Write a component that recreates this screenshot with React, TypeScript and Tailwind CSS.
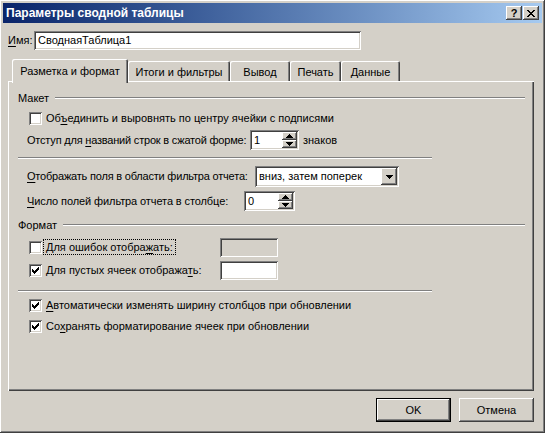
import React from "react"

// classic 3D borders
const RAISED = "shadow-[inset_-1px_-1px_#404040,inset_1px_1px_#ffffff,inset_-2px_-2px_#808080,inset_2px_2px_#d4d0c8]"
const SUNKEN = "shadow-[inset_1px_1px_#808080,inset_-1px_-1px_#ffffff,inset_2px_2px_#404040,inset_-2px_-2px_#d4d0c8]"

function U({ children }: { children: React.ReactNode }) {
  return <span className="underline underline-offset-[2px]">{children}</span>
}

function Checkbox({ checked }: { checked?: boolean }) {
  return (
    <div className={`w-[13px] h-[13px] bg-white shrink-0 relative ${SUNKEN}`}>
      {checked && (
        <svg className="absolute left-[3px] top-[3px]" width="7" height="7" viewBox="0 0 7 7">
          <path d="M0 2h1v1h1v1h1v-1h1v-1h1v-1h1v-1h1v3h-1v1h-1v1h-1v1h-1v1h-1v-1h-1v-1h-1z" fill="#000" />
        </svg>
      )}
    </div>
  )
}

function Arrow({ dir }: { dir: "up" | "down" }) {
  return (
    <svg width="7" height="4" viewBox="0 0 7 4">
      {dir === "up" ? <path d="M3 0h1v1h1v1h1v1h1v1H0V3h1V2h1V1h1z" fill="#000" /> : <path d="M0 0h7v1H6v1H5v1H4v1H3V3H2V2H1V1H0z" fill="#000" />}
    </svg>
  )
}

function Spinner({ value, width }: { value: string; width: string }) {
  return (
    <div className={`${width} h-[20px] shrink-0 bg-white flex items-stretch p-[2px] ${SUNKEN}`}>
      <div className="flex-1 pl-[2px] leading-[16px]">{value}</div>
      <div className="w-[15px] flex flex-col">
        <div className={`flex-1 bg-[#d4d0c8] flex items-center justify-center ${RAISED}`}>
          <Arrow dir="up" />
        </div>
        <div className={`flex-1 bg-[#d4d0c8] flex items-center justify-center ${RAISED}`}>
          <Arrow dir="down" />
        </div>
      </div>
    </div>
  )
}

function GroupTitle({ title }: { title: string }) {
  return (
    <div className="h-[14px] flex items-center pl-[10px] pr-[9px]">
      <span className="leading-[14px]">{title}</span>
      <div className="flex-1 ml-[6px] h-[2px] border-t border-t-[#808080] border-b border-b-white" />
    </div>
  )
}

function Separator({ className }: { className: string }) {
  return <div className={`ml-[10px] w-[414px] h-[2px] border-t border-t-[#808080] border-b border-b-white ${className}`} />
}

function Tab({ label, width, active }: { label: string; width: string; active?: boolean }) {
  if (active) {
    return (
      <div className={`${width} h-[24px] relative z-10 -mb-[2px] bg-[#d4d0c8] rounded-t-[2px] flex items-start justify-center pt-[4px] shadow-[inset_1px_1px_#ffffff,inset_-1px_0_#404040,inset_-2px_0_#808080]`}>
        {label}
      </div>
    )
  }
  return (
    <div className={`${width} h-[20px] bg-[#d4d0c8] rounded-t-[2px] flex items-start justify-center pt-[3px] shadow-[inset_1px_1px_#ffffff,inset_-1px_0_#404040,inset_-2px_0_#808080]`}>
      {label}
    </div>
  )
}

export default function App() {
  return (
    <div
      className={`w-[545px] h-[433px] bg-[#d4d0c8] p-[2px] flex flex-col text-[11px] text-black whitespace-nowrap ${RAISED}`}
      style={{ fontFamily: '"Liberation Sans", Arial, sans-serif' }}
    >
      {/* Title bar */}
      <div className="h-[20px] mt-[1px] mx-[1px] flex items-center bg-gradient-to-r from-[#0a246a] to-[#a6caf0] pl-[3px] pr-[3px]">
        <span className="text-white font-bold text-[12px] flex-1">Параметры сводной таблицы</span>
        <div className={`w-[16px] h-[14px] bg-[#d4d0c8] flex items-center justify-center font-bold text-[11px] leading-none ${RAISED}`}>?</div>
        <div className={`w-[16px] h-[14px] ml-[1px] bg-[#d4d0c8] flex items-center justify-center ${RAISED}`}>
          <svg width="8" height="7" viewBox="0 0 8 7">
            <path d="M0 0h2v1h1v1h2V1h1V0h2v1H7v1H6v1H5v1h1v1h1v1h1v1H6V6H5V5H3v1H2v1H0V6h1V5h1V4h1V3H2V2H1V1H0z" fill="#000" />
          </svg>
        </div>
      </div>

      {/* Name */}
      <div className="mt-[8px] ml-[6px] flex items-center h-[19px]">
        <span className="w-[26px] shrink-0"><U>И</U>мя:</span>
        <div className={`w-[327px] h-[19px] bg-white pl-[4px] leading-[19px] ${SUNKEN}`}>СводнаяТаблица1</div>
      </div>

      {/* Tabs */}
      <div className="mt-[7px] ml-[8px] flex items-end pl-[2px] h-[24px]">
        <Tab label="Разметка и формат" width="w-[116px]" active />
        <Tab label="Итоги и фильтры" width="w-[102px]" />
        <Tab label="Вывод" width="w-[60px]" />
        <Tab label="Печать" width="w-[51px]" />
        <Tab label="Данные" width="w-[59px]" />
      </div>

      {/* Panel */}
      <div className={`ml-[6px] w-[526px] h-[310px] pt-[10px] flex flex-col shadow-[inset_1px_1px_#ffffff,inset_-1px_-1px_#404040,inset_-2px_-2px_#808080]`}>
        <GroupTitle title="Макет" />
        <div className="mt-[6px] h-[14px] flex items-center pl-[21px] gap-[4px]">
          <Checkbox />
          <span>Об<U>ъ</U>единить и выровнять по центру ячейки с подписями</span>
        </div>
        <div className="mt-[5px] h-[20px] flex items-center pl-[19px]">
          <span className="w-[223px] shrink-0 tracking-[-0.2px]">Отступ для <U>н</U>азваний строк в сжатой форме:</span>
          <Spinner value="1" width="w-[49px]" />
          <span className="ml-[4px]">знаков</span>
        </div>
        <Separator className="mt-[7px]" />
        <div className="mt-[7px] h-[21px] flex items-center pl-[19px]">
          <span className="w-[228px] shrink-0 tracking-[-0.2px]"><U>О</U>тображать поля в области фильтра отчета:</span>
          <div className={`w-[144px] h-[21px] shrink-0 bg-white flex items-stretch p-[2px] ${SUNKEN}`}>
            <div className="flex-1 pl-[2px] leading-[17px]">вниз, затем поперек</div>
            <div className={`w-[16px] bg-[#d4d0c8] flex items-center justify-center ${RAISED}`}>
              <Arrow dir="down" />
            </div>
          </div>
        </div>
        <div className="mt-[4px] h-[20px] flex items-center pl-[19px]">
          <span className="w-[217px] shrink-0 tracking-[-0.1px]"><U>Ч</U>исло полей фильтра отчета в столбце:</span>
          <Spinner value="0" width="w-[51px]" />
        </div>
        <div className="mt-[7px]">
          <GroupTitle title="Формат" />
        </div>
        <div className="mt-[6px] h-[19px] flex items-center pl-[21px]">
          <Checkbox />
          <div className="w-[176px] shrink-0 ml-[2px]">
            <span className="outline outline-1 outline-dotted outline-black px-[2px] py-[1px]">Для ошибок отобра<U>ж</U>ать:</span>
          </div>
          <div className={`w-[58px] h-[19px] bg-[#d4d0c8] ${SUNKEN}`} />
        </div>
        <div className="mt-[4px] h-[19px] flex items-center pl-[21px]">
          <Checkbox checked />
          <div className="w-[176px] shrink-0 ml-[2px] pl-[2px]">Для пустых ячеек отобража<U>т</U>ь:</div>
          <div className={`w-[58px] h-[19px] bg-white ${SUNKEN}`} />
        </div>
        <Separator className="mt-[10px]" />
        <div className="mt-[6px] h-[14px] flex items-center pl-[21px] gap-[4px]">
          <Checkbox checked />
          <span><U>А</U>втоматически изменять ширину столбцов при обновлении</span>
        </div>
        <div className="mt-[7px] h-[14px] flex items-center pl-[21px] gap-[4px]">
          <Checkbox checked />
          <span>Со<U>х</U>ранять форматирование ячеек при обновлении</span>
        </div>
      </div>

      {/* Buttons */}
      <div className="mt-[7px] flex justify-end gap-[8px] pr-[9px]">
        <div className="w-[75px] h-[24px] border border-black">
          <div className={`w-full h-full flex items-center justify-center ${RAISED}`}>OK</div>
        </div>
        <div className={`w-[75px] h-[24px] flex items-center justify-center ${RAISED}`}>Отмена</div>
      </div>
    </div>
  )
}
